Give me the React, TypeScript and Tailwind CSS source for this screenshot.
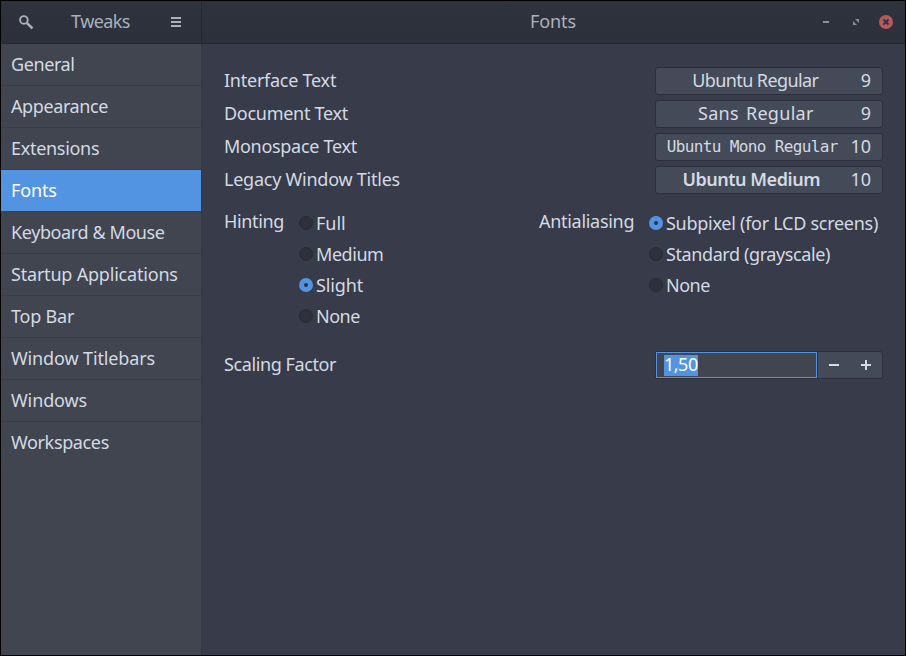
import React from 'react';

const SANS = "font-['Noto_Sans',sans-serif]";

type Item = { label: string; spacing: string };

const sections: Item[] = [
  { label: 'General', spacing: 'tracking-[-0.4px]' },
  { label: 'Appearance', spacing: 'tracking-[-0.4px]' },
  { label: 'Extensions', spacing: 'tracking-[-0.3px]' },
  { label: 'Fonts', spacing: 'tracking-[-0.12px]' },
  { label: 'Keyboard & Mouse', spacing: 'tracking-[-0.4px]' },
  { label: 'Startup Applications', spacing: 'tracking-[-0.2px]' },
  { label: 'Top Bar', spacing: 'tracking-[-0.2px]' },
  { label: 'Window Titlebars', spacing: 'tracking-[-0.13px]' },
  { label: 'Windows', spacing: 'tracking-[-0.12px]' },
  { label: 'Workspaces', spacing: 'tracking-[-0.36px]' },
];

const fonts = [
  {
    label: 'Interface Text',
    spacing: 'tracking-[-0.25px]',
    name: 'Ubuntu Regular',
    face: 'pr-1 tracking-[-0.6px]',
    size: '9',
  },
  {
    label: 'Document Text',
    spacing: 'tracking-[-0.28px]',
    name: 'Sans Regular',
    face: 'pr-[3px] tracking-[0.3px] [word-spacing:2px]',
    size: '9',
  },
  {
    label: 'Monospace Text',
    spacing: 'tracking-[-0.3px]',
    name: 'Ubuntu Mono Regular',
    face: "pt-[2px] font-['DejaVu_Sans_Mono',monospace] text-[16px] tracking-[-0.63px]",
    size: '10',
  },
  {
    label: 'Legacy Window Titles',
    spacing: 'tracking-[-0.24px]',
    name: 'Ubuntu Medium',
    face: 'pr-[2px] font-semibold tracking-[-0.46px]',
    size: '10',
  },
];

function Radio({ label, spacing, checked }: Item & { checked?: boolean }) {
  return (
    <div className="flex h-[31px] items-center gap-[3px]">
      <span
        className={
          'flex size-[14px] items-center justify-center rounded-full ' +
          (checked ? 'bg-[#5294e2]' : 'border border-[#282b34] bg-[#2d313b]')
        }
      >
        {checked && <span className="size-1 rounded-full bg-[#2d313b]" />}
      </span>
      <span className={spacing}>{label}</span>
    </div>
  );
}

export default function App() {
  return (
    <div
      className={
        SANS +
        ' flex h-[656px] w-[906px] flex-col overflow-hidden whitespace-nowrap border border-black bg-[#383b49] text-[18px] leading-[24px] text-[#d3dae3]'
      }
    >
      <header className="flex h-[43px] shrink-0 border-b border-[#252831] bg-gradient-to-b from-[#2f333e] to-[#2d303b] text-[#a9b1be]">
        <div className="flex w-[201px] items-center border-r border-[#252831] pl-[18px] pr-[19px]">
          <svg width="15" height="15" viewBox="0 0 15 15" fill="none" stroke="#a9b1be">
            <circle cx="4.9" cy="4.9" r="3.8" strokeWidth="1.9" />
            <path d="M7.8 7.8 L13.4 13.4" strokeWidth="2.6" />
          </svg>
          <span className="flex-1 pb-[2px] pr-1 text-center tracking-[-0.58px]">Tweaks</span>
          <svg width="11" height="10" viewBox="0 0 11 10" fill="#a9b1be">
            <path d="M0 0h10v2H0zM0 4h10v2H0zM0 8h10v2H0z" />
          </svg>
        </div>
        <div className="flex flex-1 items-center pr-3">
          <span className="flex-1 pb-[2px] pl-[83px] text-center tracking-[-0.12px]">Fonts</span>
          <svg width="72" height="14" viewBox="0 0 72 14">
            <path d="M2 6h6v2H2z" fill="#898e99" />
            <path d="M34 4h4v4zM32 6v4h4z" fill="#898e99" />
            <circle cx="65" cy="7" r="7" fill="#b9575f" />
            <path d="M62.5 4.5l5 5M67.5 4.5l-5 5" stroke="#2f333e" strokeWidth="1.8" />
          </svg>
        </div>
      </header>
      <div className="flex min-h-0 flex-1">
        <nav className="w-[201px] border-r border-[#343744] bg-[#404550]">
          {sections.map((s) => (
            <div
              key={s.label}
              className={
                'flex h-[42px] items-center border-b pb-px pl-[10px] ' +
                (s.label === 'Fonts'
                  ? 'border-[#3a3f4a] bg-[#5294e2] bg-clip-padding text-white'
                  : s.label === 'Workspaces'
                    ? 'border-transparent'
                    : 'border-[#3a3d49]')
              }
            >
              <span className={s.spacing}>{s.label}</span>
            </div>
          ))}
        </nav>
        <main className="flex-1 pl-[22px] pr-[22px] pt-[23px]">
          <div className="flex flex-col gap-[5px]">
            {fonts.map((f) => (
              <div key={f.label} className="flex h-7 items-center justify-between">
                <span className={'pb-[3px] ' + f.spacing}>{f.label}</span>
                <div className="flex h-7 w-[228px] items-center rounded-[3px] border border-[#2d303c] bg-[#444a57] pb-[3px]">
                  <span className={'flex-1 text-center ' + f.face}>{f.name}</span>
                  <span className="ml-[2px] mr-[11px]">{f.size}</span>
                </div>
              </div>
            ))}
          </div>
          <div className="mt-[13px] flex items-start">
            <span className="w-[75px] pt-[2px] tracking-[-0.34px]">Hinting</span>
            <div className="w-[240px]">
              <Radio label="Full" spacing="" />
              <Radio label="Medium" spacing="tracking-[-0.45px]" />
              <Radio label="Slight" spacing="tracking-[-0.1px]" checked />
              <Radio label="None" spacing="tracking-[-0.5px]" />
            </div>
            <span className="w-[110px] pt-[2px] tracking-[-0.29px]">Antialiasing</span>
            <div>
              <Radio label="Subpixel (for LCD screens)" spacing="tracking-[-0.27px]" checked />
              <Radio label="Standard (grayscale)" spacing="tracking-[-0.4px]" />
              <Radio label="None" spacing="tracking-[-0.5px]" />
            </div>
          </div>
          <div className="mt-[20px] flex h-7 items-center justify-between">
            <span className="pb-[3px] tracking-[-0.4px]">Scaling Factor</span>
            <div className="flex h-7 w-[228px] rounded-[3px] border border-[#2d303c] bg-[#444a57]">
              <div className="flex w-[161px] items-center border border-[#5294e2] bg-[#404550] pl-[7px]">
                <span className="h-[21px] w-[34px] bg-[#5294e2] leading-[19px] tracking-[-0.5px] text-white">1,50</span>
              </div>
              <div className="flex flex-1 items-center border-l border-[#2d303c]">
                <svg width="64" height="26" viewBox="0 0 64 26" fill="#d3dae3">
                  <path d="M11 12h10v2H11zM43 12h10v2H43zM47 8h2v10h-2z" />
                </svg>
              </div>
            </div>
          </div>
        </main>
      </div>
    </div>
  );
}
